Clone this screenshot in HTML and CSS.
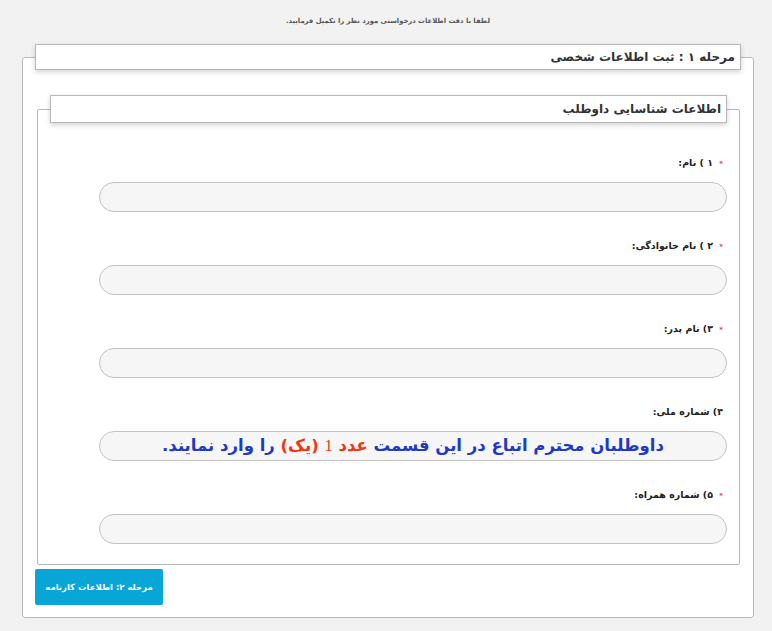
FILE: index.html
```html
<!DOCTYPE html>
<html lang="fa" dir="rtl">

<head>
  <meta charset="UTF-8">
  <meta name="viewport" content="width=device-width, initial-scale=1.0">
  <title>ثبت اطلاعات شخصی</title>
  <link rel="stylesheet" href="styles.css">
</head>

<body>
  <p class="hint">لطفا با دقت اطلاعات درخواستی مورد نظر را تکمیل فرمایید.</p>
  <form class="panel">
    <fieldset class="step">
      <legend class="step-title">مرحله ۱ : ثبت اطلاعات شخصی</legend>
      <fieldset class="box">
        <legend class="box-title">اطلاعات شناسایی داوطلب</legend>

        <div class="field">
          <label class="label"><span class="req">*</span> ۱ ) نام:</label>
          <input class="input" type="text">
        </div>
        <div class="field">
          <label class="label"><span class="req">*</span> ۲ ) نام خانوادگی:</label>
          <input class="input" type="text">
        </div>
        <div class="field">
          <label class="label"><span class="req">*</span> ۳) نام پدر:</label>
          <input class="input" type="text">
        </div>
        <div class="field">
          <label class="label">۴) شماره ملی:</label>
          <div class="input notice">
            داوطلبان محترم اتباع در این قسمت <span class="red">عدد <span class="num">1</span> (یک)</span> را وارد نمایند.
          </div>
        </div>
        <div class="field">
          <label class="label"><span class="req">*</span> ۵) شماره همراه:</label>
          <input class="input" type="text">
        </div>
      </fieldset>
      <div class="actions">
        <button type="button" class="next">مرحله ۲: اطلاعات کارنامه</button>
      </div>
    </fieldset>
  </form>
</body>

</html>
```

FILE: styles.css
```css
* {
  margin: 0;
  padding: 0;
  box-sizing: border-box;
}

body {
  background-color: #f2f2f2;
  font-family: "DejaVu Sans", sans-serif;
  color: #333;
  padding: 0 18px 0 22px;
  height: 631px;
  overflow: hidden;
}

.hint {
  padding-top: 14px;
  line-height: 14px;
  font-size: 6.8px;
  font-weight: bold;
  color: #555;
  text-align: center;
}

.step {
  margin-top: 16px;
  background-color: #fff;
  border: 1px solid #b8b8b8;
  border-radius: 3px;
  padding: 0 12px 12px 12px;
}

.step-title,
.box-title {
  width: 100%;
  background-color: #fff;
  border: 1px solid #b8b8b8;
  box-shadow: 0 2px 5px rgba(0, 0, 0, 0.18);
  padding: 0 5px;
  font-weight: bold;
  font-size: 12px;
  color: #333;
}

.step-title {
  height: 26px;
  line-height: 24px;
}

.box {
  margin: 25px 1px 0 2px;
  border: 1px solid #b8b8b8;
  border-radius: 2px;
  padding: 32px 12px 20px 12px;
}

.box-title {
  height: 28px;
  line-height: 26px;
}

.field {
  margin-bottom: 26px;
}

.field:last-child {
  margin-bottom: 0;
}

.label {
  display: block;
  padding-right: 4px;
  height: 16px;
  line-height: 16px;
  font-size: 9.5px;
  font-weight: bold;
  color: #222;
}

.req {
  color: #e8336b;
  font-size: 7px;
  margin-left: 3px;
}

.input {
  display: block;
  margin-top: 11px;
  width: 628px;
  height: 30px;
  border: 1px solid #c2c2c2;
  border-radius: 15px;
  background-color: #f6f6f6;
  outline: none;
}

.notice {
  text-align: center;
  line-height: 27px;
  font-size: 16.5px;
  font-weight: bold;
  color: #1d3ac6;
  white-space: nowrap;
}

.red {
  color: #f3360f;
}

.num {
  font-family: "Liberation Serif", serif;
  font-weight: normal;
}

.actions {
  display: flex;
  justify-content: flex-end;
  margin-top: 4px;
}

.next {
  width: 128px;
  height: 36px;
  border: none;
  border-radius: 2px;
  background-color: #08a6d6;
  color: #fff;
  font-family: "DejaVu Sans", sans-serif;
  font-size: 8.5px;
  font-weight: bold;
  cursor: pointer;
}
```
